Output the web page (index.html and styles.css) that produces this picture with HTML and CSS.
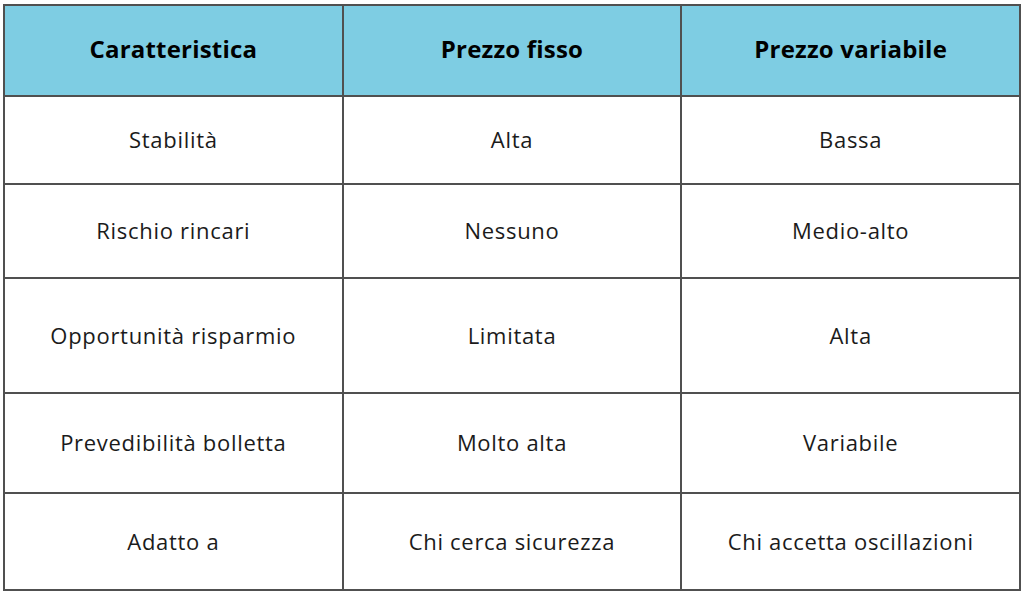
FILE: index.html
```html
<!DOCTYPE html>
<html lang="it">
<head>
<meta charset="utf-8">
<title>Prezzo fisso vs variabile</title>
<link rel="stylesheet" href="styles.css">
</head>
<body>
<table class="compare">
  <thead>
    <tr class="r-head">
      <th>Caratteristica</th>
      <th>Prezzo fisso</th>
      <th>Prezzo variabile</th>
    </tr>
  </thead>
  <tbody>
    <tr class="r1"><td>Stabilità</td><td>Alta</td><td>Bassa</td></tr>
    <tr class="r2"><td>Rischio rincari</td><td>Nessuno</td><td>Medio-alto</td></tr>
    <tr class="r3"><td>Opportunità risparmio</td><td>Limitata</td><td>Alta</td></tr>
    <tr class="r4"><td>Prevedibilità bolletta</td><td>Molto alta</td><td>Variabile</td></tr>
    <tr class="r5"><td>Adatto a</td><td>Chi cerca sicurezza</td><td>Chi accetta oscillazioni</td></tr>
  </tbody>
</table>
</body>
</html>
```

FILE: styles.css
```css
html, body {
  margin: 0;
  padding: 0;
  background: #ffffff;
}
body {
  padding: 4px 3px 0 3px;
  font-family: "Open Sans", "Liberation Sans", sans-serif;
}
.compare {
  width: 1018px;
  border-collapse: collapse;
  table-layout: fixed;
  color: #1b1b1b;
}
.compare th,
.compare td {
  border: 2px solid #505050;
  text-align: center;
  vertical-align: middle;
  padding: 0;
}
.compare th {
  background: #7ecde3;
  color: #000;
  font-weight: 700;
  font-size: 24px;
  letter-spacing: 0.2px;
  padding-bottom: 5px;
}
.compare td {
  font-size: 22px;
  font-weight: 400;
  letter-spacing: 0.7px;
  padding-bottom: 2px;
}
.r-head { height: 91px; }
.r1 { height: 88px; }
.r2 { height: 94px; }
.r3 { height: 115px; }
.r4 { height: 100px; }
.r5 { height: 97px; }
```
